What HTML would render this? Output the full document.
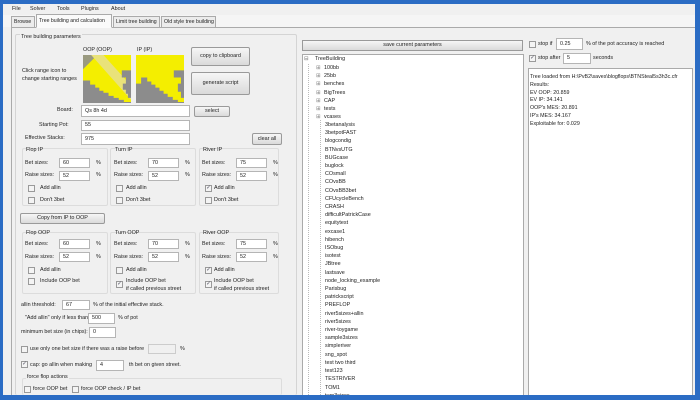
<!DOCTYPE html>
<html><head><meta charset="utf-8"><style>
*{margin:0;padding:0;box-sizing:border-box}
html{overflow:hidden;width:700px;height:400px}
body{width:700px;height:400px;background:#2b6cc4;position:relative;overflow:hidden;font-family:"Liberation Sans",sans-serif;font-size:5.4px;color:#222}
.a{position:absolute;white-space:nowrap;line-height:7px}
.win{position:absolute;left:3px;top:4px;width:692px;height:391px;background:#f0f0f0}
.in{position:absolute;background:#fff;border:1px solid #b5b5b5;font-size:5.4px;padding-left:3px;line-height:8px}
.bt{position:absolute;background:linear-gradient(#f6f6f6,#dadada);border:1px solid #9a9a9a;border-radius:2px;text-align:center;font-size:5.4px;white-space:nowrap}
.cb{position:absolute;width:7px;height:7px;border:1px solid #9a9a9a;background:#f4f4f4;font-size:5.4px;line-height:5px;text-align:center;color:#445}
.gb{position:absolute;border:1px solid #dcdcdc;border-radius:2px}
.tab{position:absolute;top:16px;height:11px;border:1px solid #aaa;border-bottom:none;background:#ececec;line-height:10px;padding:0 2px;font-size:5.2px;white-space:nowrap;overflow:hidden}
</style></head><body>
<div class="win"></div>
<div class="a" style="left:12px;top:6px">File</div>
<div class="a" style="left:30px;top:6px">Solver</div>
<div class="a" style="left:57px;top:6px">Tools</div>
<div class="a" style="left:81px;top:6px">Plugins</div>
<div class="a" style="left:111px;top:6px">About</div>
<div style="position:absolute;left:3px;top:15px;width:692px;height:12px;background:#f5f5f5"></div>
<div style="position:absolute;left:11px;top:27px;width:684px;height:1px;background:#aaa"></div>
<div style="position:absolute;left:11px;top:27px;width:1px;height:368px;background:#aaa"></div>
<div class="tab" style="left:11px;width:24px">Browse</div>
<div class="tab" style="left:36px;top:14px;height:14px;width:76px;background:#fafafa;border-bottom:1px solid #fafafa;line-height:12px">Tree building and calculation</div>
<div class="tab" style="left:113px;width:47px">Limit tree building</div>
<div class="tab" style="left:161px;width:55px">Old style tree building</div>

<div class="gb" style="left:15px;top:34px;width:282px;height:361px;border-color:#d4d4d4;border-bottom:none"></div>
<div class="a" style="left:20px;top:34px;background:#f0f0f0;padding:0 1px">Tree building parameters</div>
<div class="a" style="left:83px;top:47px">OOP (OOP)</div>
<div class="a" style="left:137px;top:47px">IP (IP)</div>
<div class="a" style="left:22px;top:67px;line-height:8px">Click range icon to<br>change starting ranges</div>
<svg style="position:absolute;left:83px;top:55px" width="48" height="48" viewBox="0 0 47 47">
<rect width="47" height="47" fill="#f4ee00"/>
<polygon points="0,0 14,0 0,14" fill="#9a9a80"/>
<polygon points="8,0 20,0 47,30 47,44" fill="#e9e27a"/>
<polygon points="0,25 7,25 7,29 12,29 12,32 16,32 16,35 20,35 20,37 25,37 25,40 30,40 30,42 35,42 35,44 40,44 40,46 47,46 47,47 0,47" fill="#8c8c8c"/>
<polygon points="38,15 47,15 47,42 44,42 44,38 42,38 42,34 39,34 39,28 42,28 42,22 38,22" fill="#8c8c8c"/>
</svg>
<svg style="position:absolute;left:136px;top:55px" width="48" height="48" viewBox="0 0 47 47">
<rect width="47" height="47" fill="#f4ee00"/>
<polygon points="0,28 5,28 5,22 11,22 11,26 15,26 15,29 19,29 19,32 23,32 23,35 27,35 27,38 31,38 31,41 36,41 36,44 41,44 41,46 47,46 47,47 0,47" fill="#8c8c8c"/>
<polygon points="37,15 47,15 47,42 44,42 44,36 41,36 41,28 44,28 44,22 37,22" fill="#8c8c8c"/>
</svg>
<div class="bt" style="left:191px;top:47px;width:59px;height:19px;line-height:17px">copy to clipboard</div>
<div class="bt" style="left:191px;top:72px;width:59px;height:23px;line-height:21px">generate script</div>
<div class="a" style="left:57px;top:107px">Board:</div>
<div class="in" style="left:81px;top:105px;width:109px;height:12px;line-height:10px">Qs 8h 4d</div>
<div class="bt" style="left:194px;top:106px;width:36px;height:11px;line-height:9px">select</div>
<div class="a" style="left:39px;top:122px">Starting Pot:</div>
<div class="in" style="left:81px;top:120px;width:109px;height:11px;line-height:9px">55</div>
<div class="a" style="left:25px;top:135px">Effective Stacks:</div>
<div class="in" style="left:81px;top:133px;width:109px;height:12px;line-height:10px">975</div>
<div class="bt" style="left:252px;top:133px;width:30px;height:12px;line-height:10px">clear all</div>

<div class="gb" style="left:22px;top:148px;width:86px;height:58px"></div>
<div class="gb" style="left:110px;top:148px;width:86px;height:58px"></div>
<div class="gb" style="left:199px;top:148px;width:80px;height:58px"></div>
<div class="a" style="left:26px;top:147px">Flop IP</div>
<div class="a" style="left:115px;top:147px">Turn IP</div>
<div class="a" style="left:203px;top:147px">River IP</div>

<div class="a" style="left:25px;top:160px">Bet sizes:</div><div class="in" style="left:59px;top:158px;width:31px;height:10px">60</div><div class="a" style="left:96px;top:160px">%</div>
<div class="a" style="left:25px;top:172px">Raise sizes:</div><div class="in" style="left:59px;top:171px;width:31px;height:10px">52</div><div class="a" style="left:96px;top:172px">%</div>
<div class="cb" style="left:28px;top:185px"></div><div class="a" style="left:40px;top:185px">Add allin</div>
<div class="cb" style="left:28px;top:197px"></div><div class="a" style="left:40px;top:197px">Don't 3bet</div>

<div class="a" style="left:114px;top:160px">Bet sizes:</div><div class="in" style="left:148px;top:158px;width:31px;height:10px">70</div><div class="a" style="left:185px;top:160px">%</div>
<div class="a" style="left:114px;top:172px">Raise sizes:</div><div class="in" style="left:148px;top:171px;width:31px;height:10px">52</div><div class="a" style="left:185px;top:172px">%</div>
<div class="cb" style="left:116px;top:185px"></div><div class="a" style="left:126px;top:185px">Add allin</div>
<div class="cb" style="left:116px;top:197px"></div><div class="a" style="left:126px;top:197px">Don't 3bet</div>

<div class="a" style="left:202px;top:160px">Bet sizes:</div><div class="in" style="left:236px;top:158px;width:31px;height:10px">75</div><div class="a" style="left:273px;top:160px">%</div>
<div class="a" style="left:202px;top:172px">Raise sizes:</div><div class="in" style="left:236px;top:171px;width:31px;height:10px">52</div><div class="a" style="left:273px;top:172px">%</div>
<div class="cb" style="left:205px;top:185px">✓</div><div class="a" style="left:214px;top:185px">Add allin</div>
<div class="cb" style="left:205px;top:197px"></div><div class="a" style="left:214px;top:197px">Don't 3bet</div>

<div class="bt" style="left:20px;top:213px;width:85px;height:11px;line-height:9px">Copy from IP to OOP</div>

<div class="gb" style="left:22px;top:232px;width:86px;height:62px"></div>
<div class="gb" style="left:110px;top:232px;width:86px;height:62px"></div>
<div class="gb" style="left:199px;top:232px;width:80px;height:62px"></div>
<div class="a" style="left:26px;top:230px">Flop OOP</div>
<div class="a" style="left:115px;top:230px">Turn OOP</div>
<div class="a" style="left:203px;top:230px">River OOP</div>

<div class="a" style="left:25px;top:241px">Bet sizes:</div><div class="in" style="left:59px;top:239px;width:31px;height:10px">60</div><div class="a" style="left:96px;top:241px">%</div>
<div class="a" style="left:25px;top:254px">Raise sizes:</div><div class="in" style="left:59px;top:252px;width:31px;height:10px">52</div><div class="a" style="left:96px;top:254px">%</div>
<div class="cb" style="left:28px;top:267px"></div><div class="a" style="left:40px;top:267px">Add allin</div>
<div class="cb" style="left:28px;top:278px"></div><div class="a" style="left:40px;top:278px">Include OOP bet</div>

<div class="a" style="left:114px;top:241px">Bet sizes:</div><div class="in" style="left:148px;top:239px;width:31px;height:10px">70</div><div class="a" style="left:185px;top:241px">%</div>
<div class="a" style="left:114px;top:254px">Raise sizes:</div><div class="in" style="left:148px;top:252px;width:31px;height:10px">52</div><div class="a" style="left:185px;top:254px">%</div>
<div class="cb" style="left:116px;top:267px"></div><div class="a" style="left:126px;top:267px">Add allin</div>
<div class="cb" style="left:116px;top:281px">✓</div><div class="a" style="left:126px;top:277px;line-height:8px">Include OOP bet<br>if called previous street</div>

<div class="a" style="left:202px;top:241px">Bet sizes:</div><div class="in" style="left:236px;top:239px;width:31px;height:10px">75</div><div class="a" style="left:273px;top:241px">%</div>
<div class="a" style="left:202px;top:254px">Raise sizes:</div><div class="in" style="left:236px;top:252px;width:31px;height:10px">52</div><div class="a" style="left:273px;top:254px">%</div>
<div class="cb" style="left:205px;top:267px">✓</div><div class="a" style="left:214px;top:267px">Add allin</div>
<div class="cb" style="left:205px;top:281px">✓</div><div class="a" style="left:214px;top:277px;line-height:8px">Include OOP bet<br>if called previous street</div>

<div class="a" style="left:21px;top:302px">allin threshold:</div><div class="in" style="left:62px;top:300px;width:28px;height:10px">67</div><div class="a" style="left:93px;top:302px">% of the initial effective stack.</div>
<div class="a" style="left:25px;top:315px">"Add allin" only if less than:</div><div class="in" style="left:88px;top:313px;width:27px;height:11px">500</div><div class="a" style="left:118px;top:315px">% of pot</div>
<div class="a" style="left:21px;top:329px">minimum bet size (in chips):</div><div class="in" style="left:89px;top:327px;width:27px;height:11px">0</div>
<div class="cb" style="left:21px;top:346px"></div><div class="a" style="left:30px;top:346px">use only one bet size if there was a raise before</div><div class="in" style="left:148px;top:344px;width:28px;height:10px;background:#f0f0f0;border-color:#ccc"></div><div class="a" style="left:180px;top:346px">%</div>
<div class="cb" style="left:21px;top:361px">✓</div><div class="a" style="left:30px;top:362px">cap: go allin when making</div><div class="in" style="left:96px;top:360px;width:28px;height:11px">4</div><div class="a" style="left:129px;top:362px">th bet on given street.</div>
<div class="gb" style="left:22px;top:378px;width:260px;height:17px;border-bottom:none"></div>
<div class="a" style="left:26px;top:374px;background:#f0f0f0;padding:0 1px">force flop actions</div>
<div class="cb" style="left:24px;top:386px"></div><div class="a" style="left:33px;top:386px">force OOP bet</div>
<div class="cb" style="left:72px;top:386px"></div><div class="a" style="left:81px;top:386px">force OOP check / IP bet</div>

<div class="bt" style="left:302px;top:40px;width:221px;height:11px;line-height:9px;border-radius:0">save current parameters</div>
<div style="position:absolute;left:302px;top:54px;width:222px;height:341px;background:#fff;border:1px solid #aaa;border-bottom:none"></div>
<div style="position:absolute;left:308px;top:64px;width:0;height:331px;border-left:1px dotted #bbb"></div>
<div style="position:absolute;left:320px;top:120px;width:0;height:275px;border-left:1px dotted #bbb"></div>
<div class="a" style="left:304px;top:56px;color:#777">⊟</div>
<div class="a" style="left:315px;top:56px">TreeBuilding</div>
<div class="a" style="left:316px;top:64px;line-height:8.2px;color:#888">⊞<br>⊞<br>⊞<br>⊞<br>⊞<br>⊞<br>⊞</div>
<div class="a" style="left:324px;top:64px;line-height:8.2px">100bb<br>25bb<br>benches<br>BigTrees<br>CAP<br>tests<br>vcases</div>
<div class="a" style="left:325px;top:121px;line-height:8.2px;height:274px;overflow:hidden">3betanalysis<br>3betpotFAST<br>blogcondig<br>BTNvsUTG<br>BUGcase<br>buglock<br>COsmall<br>COvsBB<br>COvsBB3bet<br>CFUcycleBench<br>CRASH<br>difficultPatrickCase<br>equitytest<br>excase1<br>hibench<br>ISObug<br>isotest<br>JBtree<br>lastsave<br>node_locking_example<br>Parisbug<br>patrickscript<br>PREFLOP<br>river5sizes+allin<br>river5sizes<br>river-toygame<br>sample3sizes<br>simpleriver<br>sng_spot<br>test two third<br>test123<br>TESTRIVER<br>TOM1<br>turn3sizes</div>

<div class="cb" style="left:529px;top:41px"></div><div class="a" style="left:538px;top:41px">stop if</div>
<div class="in" style="left:556px;top:38px;width:27px;height:12px;line-height:10px">0.25</div>
<div class="a" style="left:586px;top:41px">% of the pot accuracy is reached</div>
<div class="cb" style="left:529px;top:55px">✓</div><div class="a" style="left:538px;top:55px">stop after</div>
<div class="in" style="left:563px;top:53px;width:28px;height:11px">5</div>
<div class="a" style="left:593px;top:55px">seconds</div>
<div style="position:absolute;left:528px;top:68px;width:165px;height:327px;background:#fff;border:1px solid #aaa;border-bottom:none"></div>
<div class="a" style="left:530px;top:74px;line-height:7.8px;font-size:5.3px">Tree loaded from H:\PvB2\saves\blogflops\BTNSteal5s3h3c.cfr<br>Results:<br>EV OOP: 20.859<br>EV IP: 34.141<br>OOP's MES: 20.891<br>IP's MES: 34.167<br>Exploitable for: 0.029</div>
<div style="position:absolute;left:0;top:395px;width:700px;height:5px;background:#2b6cc4"></div>
</body></html>
